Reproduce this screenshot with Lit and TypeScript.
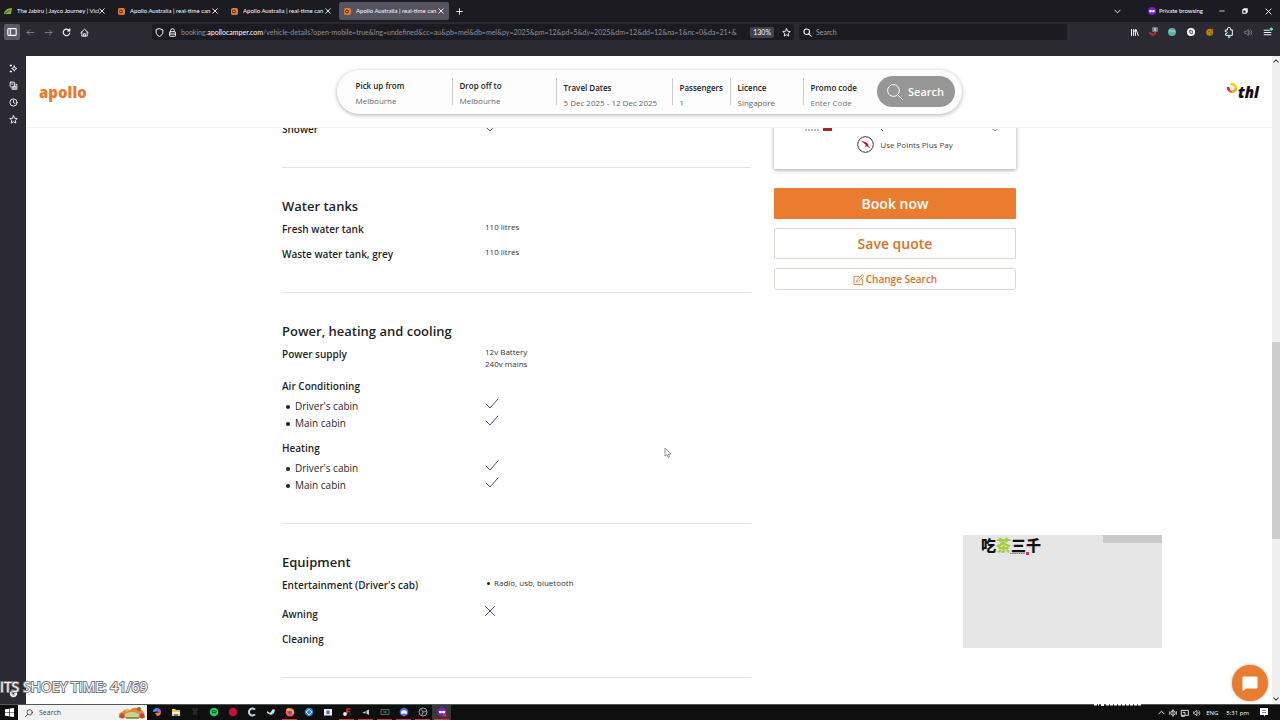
import { LitElement, html, css, svg, nothing } from "lit";
import type { TemplateResult } from "lit";
import { customElement, property } from "lit/decorators.js";
import { classMap } from "lit/directives/class-map.js";

const shared = css`
  *, *::before, *::after { box-sizing: border-box; }
  button, input, select { font: inherit; color: inherit; margin: 0; padding: 0; border: 0; background: none; border-radius: 0; min-width: 0; }
  button { display: flex; align-items: center; justify-content: center; cursor: pointer; }
  a { color: inherit; text-decoration: none; }
  svg { display: block; flex: none; overflow: visible; }
  h2, ul, dl, dd, dt, p { margin: 0; padding: 0; font: inherit; }
  ul { list-style: none; }
  .line { fill: none; stroke: currentColor; stroke-linecap: round; stroke-linejoin: round; }
`;

/* Stroked icon on a square grid. */
const icon = (size: number, grid: number, body: unknown, width = 1) => svg`
  <svg width=${size} height=${size} viewBox="0 0 ${grid} ${grid}" aria-hidden="true"
    fill="none" stroke="currentColor" stroke-width=${width} stroke-linecap="round" stroke-linejoin="round">${body}</svg>`;

const glyph = {
  close: svg`<path d="M1 1l6 6M7 1l-6 6"/>`,
  plus: svg`<path d="M4 0.8v6.4M0.8 4h6.4"/>`,
  chevronDown: svg`<path d="M1 2.5l3 3 3-3"/>`,
  chevronUp: svg`<path d="M1 5.5l3-3 3 3"/>`,
  panel: svg`<rect x="1" y="2" width="10" height="8" rx="1"/><path d="M4 2v8"/>`,
  back: svg`<path d="M10.5 6h-9M5 2.5L1.5 6 5 9.5"/>`,
  forward: svg`<path d="M1.5 6h9M7 2.5L10.5 6 7 9.5"/>`,
  reload: svg`<path d="M9.6 3.2A4.4 4.4 0 1 0 10.4 6.6M10.4 1v3H7.4"/>`,
  home: svg`<path d="M1 6.4L6 1.6l5 4.8M2.4 5.2v5.6h7.2V5.2M4.8 10.8V7.6h2.4v3.2"/>`,
  shield: svg`<path d="M6 1l4.5 1.4v3.2c0 2.6-1.8 4.4-4.5 5.6C3.300 10 1.500 8.200 1.500 5.600V2.400z"/>`,
  lock: svg`<rect x="2" y="5" width="8" height="6" rx="1"/><path d="M3.600 5V3.400a2.400 2.400 0 0 1 4.800 0V5M2.400 8h7.200"/>`,
  star: svg`<path d="M6 1l1.500 3.300 3.500.4-2.600 2.400.7 3.600L6 9l-3.100 1.700.7-3.600L1 4.700l3.500-.4z"/>`,
  lens: svg`<circle cx="5" cy="5" r="3.700"/><path d="M7.800 7.800L11 11"/>`,
  sparkle: svg`<path d="M7 2.500l1 2.500 2.500 1L8 7 7 9.500 6 7 3.500 6 6 5z"/><path d="M2.500 1v2M1.500 2h2M2.500 9v2M1.500 10h2"/>`,
  tabs: svg`<rect x="1.500" y="1.500" width="6" height="6.500" rx="1"/><path d="M3.500 4h2M9 4.500h1.500V11H4V9.500M6 7h3v2.500H6z"/>`,
  clock: svg`<circle cx="6" cy="6" r="4.800"/><path d="M6 3v3.200l2 1"/>`,
  gear: svg`<circle cx="6" cy="6" r="1.800"/><circle cx="6" cy="6" r="4" stroke-dasharray="2 1.140" stroke-width="1.800"/><circle cx="6" cy="6" r="3.400"/>`,
  library: svg`<path d="M2 2v8M4.800 2v8M7.200 2v8M8.400 2.500L11 10M5 4h2"/>`,
  puzzle: svg`<path d="M2 4.500h2.200V3.200a1.800 1.800 0 0 1 3.600 0v1.300H10V11H2V8.800h.8a1.100 1.100 0 0 0 0-2.200H2z"/>`,
  sound: svg`<path d="M1 4.500v3h2L5.800 10V2L3 4.500zM7.500 4.500a2 2 0 0 1 0 3M9 2.600a4.600 4.600 0 0 1 0 6.800"/>`,
  menu: svg`<path d="M1.500 3h7M1.500 6h9M1.500 9h9"/>`,
};

@customElement("browser-chrome")
export class BrowserChrome extends LitElement {
  static styles = [shared, css`
    :host { display: block; background: #2b2a33; color: #fbfbfe; font: 7px/10px Lato, "Open Sans", sans-serif; padding-bottom: 14px; }
    .tabs { display: flex; align-items: center; gap: 3px; height: 22px; background: #1c1b22; padding-right: 8px; }
    .tab { display: flex; align-items: center; width: 110px; height: 18px; padding: 0 5px 0 4px; border-radius: 2px; }
    .tab.on { background: #54535f; }
    .name { display: block; flex: 1; margin-left: 5px; overflow: hidden; white-space: nowrap; text-align: left; font-size: 6px; }
    .add { margin-left: 4px; }
    .spread { flex: 1; }
    .private { display: flex; align-items: center; gap: 3px; margin-left: 24px; font-size: 6px; }
    .win { width: 8px; margin-left: 12px; }
    .bar { display: flex; align-items: center; height: 20px; padding: 0 5px 0 4px; gap: 5px; }
    .tool { width: 16px; height: 16px; border-radius: 2px; }
    .tool.on { background: #5b5a66; }
    .tool.off { color: #85848f; }
    .nav { display: flex; gap: 2px; margin-right: 55px; }
    .field { display: flex; align-items: center; min-width: 0; height: 16px; background: #1c1b22; border-radius: 2px; }
    .url { flex: 639; gap: 4px; padding: 0 0 0 3px; }
    .addr { flex: 1; min-width: 0; overflow: hidden; white-space: nowrap; color: #8f8e99; }
    .addr b { font-weight: 400; color: #fbfbfe; }
    .zoom { background: #42414d; border-radius: 2px; padding: 0 3px; height: 11px; }
    .find { flex: 260; gap: 4px; padding: 0 4px; }
    .find input { flex: 1; }
    .find input::placeholder { color: #9b9aa5; opacity: 1; }
    .exts { display: flex; gap: 3px; margin-left: 54px; }
  `];

  private ext(label: string, body: unknown, off = false) {
    return html`<button class=${classMap({ tool: true, off })} aria-label=${label}>${body}</button>`;
  }

  render() {
    const orange = svg`<svg width="8" height="8" viewBox="0 0 8 8"><rect x="1" y="1" width="7" height="7" rx="2" fill="#e97c2e"/><circle cx="4" cy="4.500" r="1.500" fill="none" stroke="#3a2a22" stroke-width="1"/></svg>`;
    const green = svg`<svg width="8" height="8" viewBox="0 0 8 8"><path d="M0 7C0 4 3 1 8 1L7 7z" fill="#8cae3f"/><path d="M1 6.500L6 3" stroke="#3c5420"/></svg>`;
    const titles = ["The Jabiru | Jayco Journey | Vict", "Apollo Australia | real-time can", "Apollo Australia | real-time can", "Apollo Australia | real-time can"];
    return html`
      <div class="tabs">
        ${titles.map((t, i) => html`
          <div class=${classMap({ tab: true, on: i === 3 })}>
            ${i ? orange : green}<button class="name">${t}</button>
            <button aria-label="Close tab">${icon(6, 8, glyph.close, 1.2)}</button>
          </div>`)}
        <button class="add" aria-label="New tab">${icon(7, 8, glyph.plus)}</button>
        <span class="spread"></span>
        <button aria-label="List all tabs">${icon(7, 8, glyph.chevronDown)}</button>
        <span class="private">
          <svg width="8" height="8" viewBox="0 0 8 8"><circle cx="4" cy="4" r="4" fill="#7a1fd6"/><path d="M1.200 3.400c1-.6 1.900-.3 2.800.2.900-.5 1.800-.8 2.800-.2 0 1.500-.6 2-1.300 2S4.400 4.800 4 4.800s-.8.6-1.500.6-1.300-.5-1.300-2z" fill="#fff"/></svg>
          Private browsing
        </span>
        <button class="win" aria-label="Minimise">${icon(6, 8, svg`<path d="M1 4h6"/>`)}</button>
        <button class="win" aria-label="Restore">${icon(6, 8, svg`<path d="M1 2.500h4.500V7H1zM2.500 2.500V1H7v4.500H5.500"/>`, 1.4)}</button>
        <button class="win" aria-label="Close">${icon(7, 8, glyph.close)}</button>
      </div>
      <div class="bar">
        <div class="nav">
          <button class="tool on" aria-label="Sidebar">${icon(10, 12, glyph.panel, 1.4)}</button>
          <button class="tool off" aria-label="Back">${icon(9, 12, glyph.back, 1.2)}</button>
          <button class="tool off" aria-label="Forward">${icon(9, 12, glyph.forward, 1.2)}</button>
          <button class="tool" aria-label="Reload">${icon(9, 12, glyph.reload, 1.5)}</button>
          <button class="tool" aria-label="Home">${icon(9, 12, glyph.home, 1.2)}</button>
        </div>
        <div class="field url">
          ${icon(9, 12, glyph.shield, 1.3)}${icon(9, 12, glyph.lock, 1.3)}
          <span class="addr">booking.<b>apollocamper.com</b>/vehicle-details?open-mobile=true&amp;lng=undefined&amp;cc=au&amp;pb=mel&amp;db=mel&amp;py=2025&amp;pm=12&amp;pd=5&amp;dy=2025&amp;dm=12&amp;dd=12&amp;na=1&amp;nc=0&amp;da=21+&amp;</span>
          <button class="zoom">130%</button>
          <button class="tool" aria-label="Bookmark">${icon(9, 12, glyph.star, 1.2)}</button>
        </div>
        <div class="field find">
          ${icon(9, 12, glyph.lens, 1.4)}
          <input aria-label="Search the web" placeholder="Search" />
        </div>
        <div class="exts">
          ${this.ext("Library", icon(9, 12, glyph.library, 1.3))}
          ${this.ext("Blocker", svg`<svg width="10" height="10" viewBox="0 0 10 10"><path d="M1 5l4 1.500L8 4v3L5 9 1.500 7.500z" fill="#c8242f"/><rect x="4" y="0" width="6" height="5" rx="1" fill="#75747e"/><path d="M7 1v3" stroke="#fff"/></svg>`)}
          ${this.ext("Globe", svg`<svg width="8" height="8" viewBox="0 0 8 8"><circle cx="4" cy="4" r="4" fill="#5fb3a8"/><path d="M1 3c2-1 4 1 6 0" stroke="#a9ddd2" fill="none"/></svg>`)}
          ${this.ext("Badge", svg`<svg width="8" height="8" viewBox="0 0 8 8"><circle cx="4" cy="4" r="4" fill="#fff"/><path d="M2.500 2.500l3 .5-.5 3-2-1z" fill="none" stroke="#4d4c57"/></svg>`)}
          ${this.ext("Cookies", svg`<svg width="8" height="8" viewBox="0 0 8 8"><circle cx="3.700" cy="4.300" r="3.500" fill="#b98112"/><circle cx="6.500" cy="1.500" r="1" fill="#b33"/><path d="M2.500 3.500h1M4.500 5.500h1" stroke="#5c3c05"/></svg>`)}
          ${this.ext("Extensions", svg`<svg width="10" height="12" viewBox="0 0 12 14" class="line" stroke-width="1.200">${glyph.puzzle}<circle cx="6" cy="13" r="1" fill="#54ffbd" stroke="#54ffbd"/></svg>`)}
          ${this.ext("Sound", icon(9, 12, glyph.sound, 1.1), true)}
          ${this.ext("Menu", svg`<svg width="9" height="9" viewBox="0 0 12 12" class="line" stroke-width="1.300">${glyph.menu}<circle cx="11" cy="1.500" r="1.500" fill="#54ffbd" stroke="#54ffbd"/></svg>`)}
        </div>
      </div>`;
  }
}

@customElement("side-rail")
export class SideRail extends LitElement {
  static styles = [shared, css`
    :host { display: flex; flex-direction: column; align-items: center; justify-content: space-between; flex: none; width: 26px; background: #2b2a33; color: #fbfbfe; padding: 4px 0 3px; }
    .stack { display: flex; flex-direction: column; gap: 1px; }
    .tool { width: 16px; height: 16px; }
  `];
  render() {
    const tool = (label: string, g: unknown) => html`<button class="tool" aria-label=${label}>${icon(9, 12, g, 1.2)}</button>`;
    return html`
      <div class="stack">
        ${tool("Chatbot", glyph.sparkle)}${tool("Synced tabs", glyph.tabs)}${tool("History", glyph.clock)}${tool("Bookmarks", glyph.star)}
      </div>
      ${tool("Customise sidebar", glyph.gear)}`;
  }
}

@customElement("search-header")
export class SearchHeader extends LitElement {
  static styles = [shared, css`
    :host { display: grid; grid-template-columns: 1fr auto 1fr; align-items: center; height: 72px; padding: 0 13px; background: #fff; border-bottom: 1px solid #f3f3f3; }
    .apollo { font: 800 15px/20px "Open Sans", sans-serif; color: #e47c30; }
    .thl { display: flex; justify-self: end; font: italic 800 15px/20px "Open Sans", sans-serif; color: #111; }
    .ring { margin: 1px 1px 0 0; }
    .pill { display: flex; align-items: center; height: 44px; padding: 0 7px 0 12px; border-radius: 22px; background: #fdfdfd; box-shadow: 0 1px 4px rgb(0 0 0 / 32%); }
    .part { height: 27px; padding: 0 7px; border-right: 1px solid #ccc; font: 8px/15px "Open Sans", sans-serif; }
    .part.low { padding-top: 2px; }
    .part:last-of-type { border-right: 0; }
    .w-place { width: 104px; } .w-dates { width: 116px; } .w-pax { width: 58px; } .w-short { width: 73px; }
    .part label { display: block; font-weight: 600; color: #222; white-space: nowrap; }
    .part input { display: block; width: 100%; height: 15px; color: #666; line-height: 15px; }
    .part input::placeholder { color: #777; opacity: 1; }
    .go { width: 78px; height: 31px; gap: 5px; border-radius: 16px; background: #979797; color: #fff; font: 600 11px/16px "Open Sans", sans-serif; }
  `];
  render() {
    const parts: [string, string, string, boolean][] = [
      ["Pick up from", "Melbourne", "w-place", false],
      ["Drop off to", "Melbourne", "w-place", false],
      ["Travel Dates", "5 Dec 2025 - 12 Dec 2025", "w-dates", true],
      ["Passengers", "1", "w-pax", true],
      ["Licence", "Singapore", "w-short", true],
      ["Promo code", "", "w-short", true],
    ];
    return html`
      <a class="apollo" href="#">apollo</a>
      <form class="pill" @submit=${(e: Event) => e.preventDefault()}>
        ${parts.map(([name, value, width, low], i) => html`
          <div class=${classMap({ part: true, low, [width]: true })}>
            <label for="f${i}">${name}</label>
            <input id="f${i}" .value=${value} placeholder=${value ? nothing : "Enter Code"} />
          </div>`)}
        <button class="go">${icon(16, 16, svg`<circle cx="6.500" cy="6.500" r="5.900"/><path d="M11 11l4.500 4.500"/>`)}Search</button>
      </form>
      <a class="thl" href="#" aria-label="thl">
        <svg class="ring" width="10" height="10" viewBox="0 0 10 10" fill="none" stroke-width="2.600">
          <path d="M3.500 1.600A3.800 3.800 0 0 1 8.800 5" stroke="#f7d400"/><path d="M8.800 5A3.800 3.800 0 0 1 5 8.800" stroke="#f3a01c"/><path d="M5 8.800A3.800 3.800 0 0 1 2.200 7.500" stroke="#e8641f"/><path d="M2.200 7.500A3.800 3.800 0 0 1 1.300 4" stroke="#c9203b"/>
        </svg>thl
      </a>`;
  }
}

type Value = "check" | "cross" | { lines: string[] } | { bullet: string } | null;
interface Row { name: string; value?: Value; items?: string[]; }

@customElement("spec-section")
export class SpecSection extends LitElement {
  @property() heading = "";
  @property({ attribute: false }) rows: Row[] = [];

  static styles = [shared, css`
    :host { display: block; padding-bottom: 22px; border-bottom: 1px solid #e3e3e3; color: #1f1f1f; font: 600 10px/14px "Open Sans", sans-serif; }
    h2 { padding-top: 27px; margin-bottom: 3px; font: 600 13px/22px "Open Sans", sans-serif; }
    .row, .item { display: grid; grid-template-columns: 203px 1fr; align-items: start; }
    dt { padding: 2px 0 9px; }
    .row dd { padding: 1px 0 7px; font-weight: 400; font-size: 8px; line-height: 12px; color: #333; }
    .group dt { padding-bottom: 5px; }
    .items { padding-bottom: 7px; }
    .item { font-weight: 400; line-height: 17px; }
    .bullet { display: flex; align-items: center; gap: 5px; }
    .bullet::before { content: ""; width: 4px; height: 4px; border-radius: 2px; background: #1f1f1f; margin-left: 4px; }
    .small { gap: 4px; margin-bottom: 9px; }
    .small::before { width: 3px; height: 3px; margin-left: 2px; }
    .mark { color: #4a4e94; }
  `];

  private check() {
    return svg`<svg class="mark line" width="14" height="12" viewBox="0 0 14 12" role="img" aria-label="Yes"><path d="M1 6l4 4 8-9"/></svg>`;
  }

  private value(v: Value | undefined): TemplateResult | unknown {
    if (v === "check") return this.check();
    if (v === "cross") return svg`<svg class="mark line" width="10" height="10" viewBox="0 0 10 10" role="img" aria-label="No"><path d="M.5.500l9 9M9.500.500l-9 9"/></svg>`;
    if (v && "lines" in v) return v.lines.map((l) => html`<div>${l}</div>`);
    if (v) return html`<div class="bullet small">${v.bullet}</div>`;
    return nothing;
  }

  render() {
    return html`
      ${this.heading ? html`<h2>${this.heading}</h2>` : nothing}
      <dl>
        ${this.rows.map((r) => r.items
          ? html`<div class="group"><dt>${r.name}</dt><dd class="items">${r.items.map((n) => html`<div class="item"><span class="bullet">${n}</span>${this.check()}</div>`)}</dd></div>`
          : html`<div class="row"><dt>${r.name}</dt><dd>${this.value(r.value)}</dd></div>`)}
      </dl>`;
  }
}

@customElement("booking-panel")
export class BookingPanel extends LitElement {
  static styles = [shared, css`
    :host { display: flex; flex-direction: column; font: 600 14px/20px "Open Sans", sans-serif; color: #d96f28; }
    .card { display: flex; flex-direction: column; padding: 4px 30px 13px; margin-bottom: 19px; box-shadow: 0 1px 4px rgb(0 0 0 / 38%); background: #fff; }
    .points { display: flex; align-items: center; justify-content: center; gap: 6px; padding: 4px 0 3px 20px; font: 8px/16px "Open Sans", sans-serif; color: #444; }
    .big { height: 31px; border: 1px solid #e0d3cf; border-radius: 1px; margin-bottom: 9px; background: #fff; }
    .book { background: #e97c2e; border-color: #e97c2e; color: #fff; }
    .change { height: 22px; gap: 2px; border: 1px solid #e6d2c8; border-radius: 3px; font-size: 10px; background: #fff; }
  `];
  render() {
    return html`
      <div class="card">
        <svg width="100%" height="8" aria-hidden="true">
          <path d="M1 6h14" stroke="#777" stroke-dasharray="2 1"/><rect x="19" y="3" width="9" height="4" fill="#b2202c"/>
          <path d="M77 5l2 2M189 5c0 2 4 2 4 0" fill="none" stroke="#777"/>
        </svg>
        <div class="points">
          <svg width="17" height="17" viewBox="0 0 17 17"><circle cx="8.500" cy="8.500" r="7.800" fill="#fff" stroke="#333"/><path d="M3.500 4.500l6 2 2 2-.5.8 2.500 3.200-3.800-2.300-1.700.6.8-2z" fill="#c8102e"/></svg>
          Use Points Plus Pay
        </div>
      </div>
      <button class="big book">Book now</button>
      <button class="big">Save quote</button>
      <button class="change">
        ${icon(11, 12, svg`<path d="M10.500 6v5.500H1V2.500h5.500M4 8.500l.6-2.300L10 .8l1.600 1.500-5.400 5.500z"/>`, 0.9)}Change Search
      </button>`;
  }
}

@customElement("task-bar")
export class TaskBar extends LitElement {
  static styles = [shared, css`
    :host { display: flex; align-items: stretch; height: 16px; flex: none; background: #0f0f10; color: #fff; border-top: 1px solid #4c5a57; font: 7px/10px "Open Sans", sans-serif; }
    .start { width: 18px; }
    .seek { display: flex; align-items: center; gap: 6px; width: 129px; padding: 0 1px 0 7px; background: #f2f2f2; color: #333; }
    .seek input { flex: 1; width: 20px; }
    .seek input::placeholder { color: #444; opacity: 1; }
    .app { width: 19px; border-bottom: 1px solid transparent; }
    .app.run { border-image: linear-gradient(90deg, transparent 15%, #d23a3a 15% 85%, transparent 85%) 1; }
    .app.on { background: #38373c; }
    .tray { display: flex; align-items: center; gap: 4px; margin-left: auto; padding-right: 12px; font-size: 6px; }
    .lang { margin: 0 4px 0 1px; } .time { margin-right: 7px; }
  `];
  render() {
    const apps: [string, unknown, string?][] = [
      ["Copilot", svg`<path d="M1 5c0-3 2-4 4-4l3 3z" fill="#3a9be8"/><path d="M9 5c0 3-2 4-4 4L3 6z" fill="#ef7a4a"/><path d="M5 1c3 0 4 2 4 4L6 5z" fill="#a05bd8"/>`],
      ["Files", svg`<path d="M1 2h3l1 1h4v6H1z" fill="#f6c94c"/><path d="M1 5h8v2H1z" fill="#fff0c0"/><path d="M3 7h4v2H3z" fill="#3c8ad8"/>`],
      ["Studio", svg`<path d="M2 2h2v6M6 2h2M6 2v6" stroke="#303034" stroke-width="1.500" fill="none"/>`],
      ["Music", svg`<circle cx="5" cy="5" r="4.300" fill="#1fcf60"/><path d="M2.600 4q2.500-1 5 .3M3 5.700q2-.7 4 .3" stroke="#0c4d24" fill="none"/>`],
      ["Recorder", svg`<circle cx="5" cy="5" r="4.300" fill="#c2113f"/>`],
      ["Cleaner", svg`<path d="M8 2.600a3.500 3.500 0 1 0 0 4.800" stroke="#c3d2dd" stroke-width="2" fill="none"/>`],
      ["Games", svg`<path d="M1 4l3 2 3-4 2 1-1 3-3 2-4-2z" fill="#cfe2f2"/><path d="M5 8l3-2" stroke="#4b83b5"/>`],
      ["Firefox", svg`<circle cx="5" cy="5.300" r="4.300" fill="#f4632c"/><path d="M1 3c1-2 3-2 4-1l3 1c1 1 1 3 0 4z" fill="#ffb12b"/><circle cx="5" cy="5.500" r="2" fill="#8a3bd0"/>`, "run"],
      ["Browser", svg`<circle cx="5" cy="5" r="4.300" fill="#2d7fd8"/><path d="M2 5l3-2.500L8 5 5 8z" fill="none" stroke="#d8ecff"/>`],
      ["Photos", svg`<rect x="1" y="2" width="8" height="6.500" fill="#e9eef3"/><rect x="3.500" y="3.500" width="3" height="3.500" fill="#4b6a8b"/>`],
      ["Tool", svg`<path d="M8.500 2H5v5M5 4.500h3M8 6.500v1" stroke="#c93434" stroke-width="1.500" fill="none"/><circle cx="3" cy="7" r="1.900" fill="#eee"/>`, "run"],
      ["Capture", svg`<path d="M1 6l4-2 3-1.500V8L5 6.500z" fill="#c8ced2"/><path d="M5 4v3" stroke="#333"/>`, "run"],
      ["Deck", svg`<path d="M1 2.500h8v5H1zM3.500 4l3 2M6.500 4l-3 2" fill="none" stroke="#5b7470" stroke-width=".9"/>`, "run"],
      ["Chat", svg`<circle cx="5" cy="5" r="4.300" fill="#5865f2"/><path d="M2.500 4q2.500-1.500 5 0l.5 2.500-1.500.5-1.500-.8-1.500.8L2 6.500z" fill="#fff"/>`, "run"],
      ["Streaming", svg`<circle cx="5" cy="5" r="4" fill="#17171a" stroke="#9a9a9e"/><path d="M5 5L3.500 2.500M5 5l3-.5M5 5L4 8" stroke="#9a9a9e"/>`, "run"],
      ["Private window", svg`<circle cx="5" cy="5" r="4.500" fill="#7a1fb8"/><path d="M1.700 4.300q1.800-1 3.300.2 1.500-1.200 3.300-.2 0 2.500-1.600 2.200L5 5.700l-1.700.8q-1.600 0-1.600-2.200z" fill="#fff"/><circle cx="8" cy="8" r="1.500" fill="#f26"/>`, "run on"],
    ];
    return html`
      <button class="start" aria-label="Start"><svg width="9" height="9" viewBox="0 0 9 9" fill="#fff"><path d="M0 1.300l4-.6v3.500H0zM4.600.6L9 0v4.200H4.600zM0 4.800h4v3.500l-4-.6zM4.600 4.800H9V9l-4.400-.6z"/></svg></button>
      <div class="seek">
        <svg width="8" height="8" viewBox="0 0 12 12" class="line" stroke-width="1.200"><circle cx="7" cy="5" r="4"/><path d="M4 8l-3.500 3.500"/></svg>
        <input aria-label="Search this computer" placeholder="Search" />
        <svg width="28" height="13" viewBox="0 0 28 13"><path d="M1 12q-1-5 3-6 3-4 8-2 4-4 9-1 6 1 6 9z" fill="#d98b3b"/><path d="M7 8q7-4 14 0v3H7z" fill="#c9cf9a"/><circle cx="4" cy="10" r="2.500" fill="#b8552a"/><circle cx="24" cy="10" r="2.500" fill="#c4472a"/><circle cx="21" cy="3" r="2" fill="#a3602c"/><circle cx="9" cy="4" r="1.500" fill="#f0bd55"/><path d="M8 12h13" stroke="#6f8a3a" stroke-width="1.500"/></svg>
      </div>
      ${apps.map(([name, art, state = ""]) => html`
        <button class=${classMap({ app: true, run: state.includes("run"), on: state.includes("on") })} aria-label=${name}>
          <svg width="10" height="10" viewBox="0 0 10 10">${art}</svg>
        </button>`)}
      <div class="tray">
        ${icon(7, 8, glyph.chevronUp)}
        ${icon(8, 12, svg`<rect x="3" y="3" width="6" height="6" rx="2"/><path d="M1 4v4M11 4v4M6 1v2M6 9v2M5 6h2"/>`, 1.2)}
        ${icon(8, 12, svg`<rect x="1" y="2" width="10" height="7.500"/><path d="M1 11h4M3 5h3v3"/>`, 1.3)}
        ${icon(8, 12, glyph.sound, 1)}
        <span class="lang">ENG</span>
        <span class="time">5:31 pm</span>
        <svg width="8" height="9" viewBox="0 0 8 9"><path d="M0 0h8v7H5L4 9V7H0z" fill="#fff"/><path d="M2 2.500h4M2 4.500h4" stroke="#555" stroke-width=".7"/></svg>
      </div>`;
  }
}

@customElement("app-root")
export class AppRoot extends LitElement {
  static styles = [shared, css`
    :host { display: flex; flex-direction: column; height: 100vh; overflow: hidden; position: relative; background: #fff; }
    .main { flex: 1; display: flex; min-height: 0; }
    .view { flex: 1; position: relative; overflow: hidden; min-width: 0; }
    search-header { position: absolute; inset: 0 0 auto; }
    .page { display: grid; grid-template-columns: minmax(0, 1fr) 242px; column-gap: 23px; align-items: start; max-width: 734px; margin: 0 auto; padding-top: 64px; }
    .scroll { display: flex; flex-direction: column; align-items: center; width: 8px; padding: 2px 0; background: #f0f0f0; color: #444; }
    .gap { flex: 279; }
    .thumb { align-self: stretch; flex: 197; background: #cdcdcd; }
    .rest { flex: 158; }
    .chat { position: absolute; right: 4px; bottom: 3px; width: 36px; height: 36px; border-radius: 18px; background: #e97c2e; box-shadow: 0 0 3px rgb(0 0 0 / 35%); }
    .advert { position: absolute; right: 118px; bottom: 72px; width: 199px; height: 113px; background: #e6e6e6; }
    .strip { position: absolute; top: 0; right: 0; width: 59px; height: 8px; background: #cbcbcb; }
    .brand { position: absolute; top: 0; left: 18px; font: 900 15px/20px "Noto Sans CJK SC", sans-serif; color: #111; }
    .brand em { font-style: normal; color: #a5cf3a; }
    .seal { position: absolute; top: 17px; left: 47px; }
    .counter { position: absolute; left: 0; bottom: 24px; font: 400 14px/18px "Open Sans", sans-serif; color: #fff; -webkit-text-stroke: 2px #77777a; paint-order: stroke fill; white-space: nowrap; }
    .credit { position: absolute; right: 137px; bottom: 13px; }
    .pointer { position: absolute; left: 664px; top: 447px; }
  `];

  render() {
    return html`
      <browser-chrome></browser-chrome>
      <div class="main">
        <side-rail></side-rail>
        <div class="view">
          <div class="page">
            <div>
              <spec-section .rows=${[{ name: "Shower", value: "check" }]}></spec-section>
              <spec-section heading="Water tanks" .rows=${[
                { name: "Fresh water tank", value: { lines: ["110 litres"] } },
                { name: "Waste water tank, grey", value: { lines: ["110 litres"] } },
              ]}></spec-section>
              <spec-section heading="Power, heating and cooling" .rows=${[
                { name: "Power supply", value: { lines: ["12v Battery", "240v mains"] } },
                { name: "Air Conditioning", items: ["Driver's cabin", "Main cabin"] },
                { name: "Heating", items: ["Driver's cabin", "Main cabin"] },
              ]}></spec-section>
              <spec-section heading="Equipment" .rows=${[
                { name: "Entertainment (Driver's cab)", value: { bullet: "Radio, usb, bluetooth" } },
                { name: "Awning", value: "cross" },
                { name: "Cleaning", value: null },
              ]}></spec-section>
            </div>
            <booking-panel></booking-panel>
          </div>
          <search-header></search-header>
          <button class="chat" aria-label="Chat"><svg width="16" height="15" viewBox="0 0 16 15"><path d="M1 1h14v11H4l-3 2.500z" fill="#fff" stroke="#fff" stroke-linejoin="round"/></svg></button>
        </div>
        <div class="scroll">
          ${icon(6, 8, glyph.chevronUp, 1.4)}
          <span class="gap"></span><span class="thumb"></span><span class="rest"></span>
          ${icon(6, 8, glyph.chevronDown, 1.4)}
        </div>
      </div>
      <task-bar></task-bar>
      <div class="advert">
        <span class="brand">吃<em>茶</em>三千</span>
        <svg class="seal" width="20" height="3" viewBox="0 0 20 3" aria-hidden="true"><path d="M0 1.500h15" stroke="#777" stroke-dasharray="1.500 .7"/><rect x="16" width="3" height="3" fill="#d6336c"/></svg>
        <span class="strip"></span>
      </div>
      <div class="counter">ITS SHOEY TIME: 41/69</div>
      <svg class="credit" width="50" height="4" viewBox="0 0 50 4" aria-hidden="true"><path d="M1 1.500h5M8 2h3M13 1.500h36" stroke="#fff" stroke-width="2" stroke-dasharray="3 1"/></svg>
      <svg class="pointer" width="8" height="12" viewBox="0 0 8 12" aria-hidden="true"><path d="M1 1v8l2-1.600 1.300 3 1.300-.6-1.300-2.800H7z" fill="#fff" stroke="#777" stroke-width=".8"/></svg>`;
  }
}
